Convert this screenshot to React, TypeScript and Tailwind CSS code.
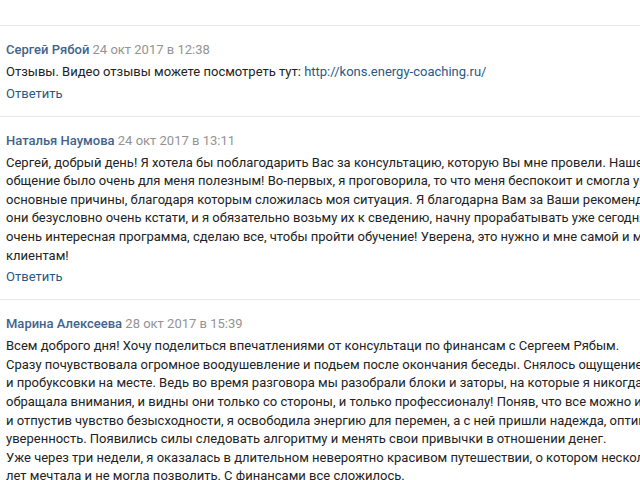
import React from "react";

type Comment = {
  author: string;
  date: string;
  lines: React.ReactNode[];
};

const comments: Comment[] = [
  {
    author: "Сергей Рябой",
    date: "24 окт 2017 в 12:38",
    lines: [
      <>
        Отзывы. Видео отзывы можете посмотреть тут:{" "}
        <a href="#" className="text-[#2a5885]">
          http://kons.energy-coaching.ru/
        </a>
      </>,
    ],
  },
  {
    author: "Наталья Наумова",
    date: "24 окт 2017 в 13:11",
    lines: [
      "Сергей, добрый день! Я хотела бы поблагодарить Вас за консультацию, которую Вы мне провели. Наше",
      "общение было очень для меня полезным! Во-первых, я проговорила, то что меня беспокоит и смогла увидеть",
      "основные причины, благодаря которым сложилась моя ситуация. Я благодарна Вам за Ваши рекомендации,",
      "они безусловно очень кстати, и я обязательно возьму их к сведению, начну прорабатывать уже сегодня.",
      "очень интересная программа, сделаю все, чтобы пройти обучение! Уверена, это нужно и мне самой и моим",
      "клиентам!",
    ],
  },
  {
    author: "Марина Алексеева",
    date: "28 окт 2017 в 15:39",
    lines: [
      "Всем доброго дня! Хочу поделиться впечатлениями от консультаци по финансам с Сергеем Рябым.",
      "Сразу почувствовала огромное воодушевление и подьем после окончания беседы. Снялось ощущение тупика",
      "и пробуксовки на месте. Ведь во время разговора мы разобрали блоки и заторы, на которые я никогда не",
      "обращала внимания, и видны они только со стороны, и только профессионалу! Поняв, что все можно изменить",
      "и отпустив чувство безысходности, я освободила энергию для перемен, а с ней пришли надежда, оптимизм и",
      "уверенность. Появились силы следовать алгоритму и менять свои привычки в отношении денег.",
      "Уже через три недели, я оказалась в длительном невероятно красивом путешествии, о котором несколько",
      "лет мечтала и не могла позволить. С финансами все сложилось.",
    ],
  },
];

function CommentRow({ c, last }: { c: Comment; last: boolean }) {
  return (
    <div className="border-t border-[#e7e8ec] pl-[6px] pt-[14px] pb-[13px]">
      <div className="h-[19px] leading-[19px] whitespace-nowrap">
        <a href="#" className="font-medium text-[#42648b]">
          {c.author}
        </a>{" "}
        <span className="text-[#939393]">{c.date}</span>
      </div>
      <div className="mt-[4px] text-[#222222]">
        {c.lines.map((l, i) => (
          <div key={i} className="h-[18.6px] leading-[18.6px] whitespace-nowrap">
            {l}
          </div>
        ))}
      </div>
      {!last && (
        <div className="mt-[2px] h-[19px] leading-[19px]">
          <a href="#" className="text-[#2a5885]">
            Ответить
          </a>
        </div>
      )}
    </div>
  );
}

export default function App() {
  return (
    <div
      className="h-[480px] w-[640px] overflow-hidden bg-white text-[13px]"
      style={{ fontFamily: "Roboto, 'Open Sans', sans-serif" }}
    >
      <div className="h-[25px]" />
      {comments.map((c, i) => (
        <CommentRow key={i} c={c} last={i === comments.length - 1} />
      ))}
    </div>
  );
}
